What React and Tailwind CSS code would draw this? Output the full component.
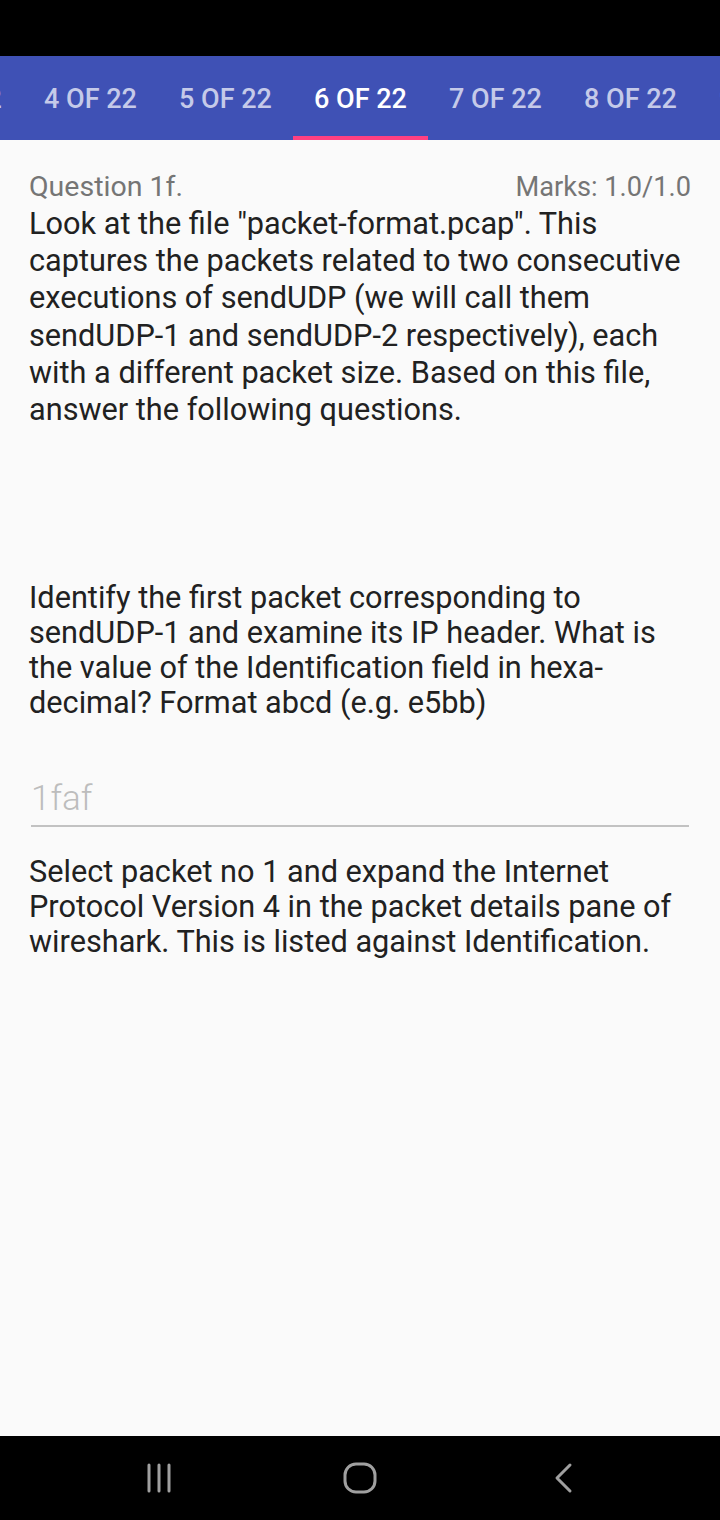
import React from 'react';

const tabs = ['3 OF 22', '4 OF 22', '5 OF 22', '6 OF 22', '7 OF 22', '8 OF 22', '9 OF 22'];

const intro = [
    'Look at the file "packet-format.pcap". This',
    'captures the packets related to two consecutive',
    'executions of sendUDP (we will call them',
    'sendUDP-1 and sendUDP-2 respectively), each',
    'with a different packet size. Based on this file,',
    'answer the following questions.',
];

const question = [
    'Identify the first packet corresponding to',
    'sendUDP-1 and examine its IP header. What is',
    'the value of the Identification field in hexa-',
    'decimal? Format abcd (e.g. e5bb)',
];

const feedback = [
    'Select packet no 1 and expand the Internet',
    'Protocol Version 4 in the packet details pane of',
    'wireshark. This is listed against Identification.',
];

const Lines = ({ lines, className }) => (
    <div className={className}>
        {lines.map((l) => (
            <div key={l} className="whitespace-nowrap">{l}</div>
        ))}
    </div>
);

const App = () => {
    return (
        <div className="w-[720px] h-[1520px] flex flex-col bg-[#fafafa] font-['Roboto',sans-serif] overflow-hidden">
            <div className="h-[56px] bg-black shrink-0" />
            <div className="h-[84px] bg-[#3f51b5] shrink-0 flex overflow-hidden">
                <div className="flex shrink-0 -ml-[112px]">
                    {tabs.map((t) => {
                        const active = t === '6 OF 22';
                        return (
                            <div key={t} className="w-[135px] shrink-0 flex flex-col">
                                <div className={`flex-1 flex items-center justify-center text-[27px] font-medium pt-[6px] ${active ? 'text-white' : 'text-[#c5cae9]'}`}>
                                    {t}
                                </div>
                                <div className={`h-[4px] ${active ? 'bg-[#ff4081]' : ''}`} />
                            </div>
                        );
                    })}
                </div>
            </div>

            <div className="flex-1 px-[29px] pt-[29px]">
                <div className="flex justify-between items-baseline leading-[36px] text-[#757575]">
                    <span className="text-[28.5px]">Question 1f.</span>
                    <span className="text-[27.2px]">Marks: 1.0/1.0</span>
                </div>
                <Lines lines={intro} className="text-[30.7px] leading-[37.2px] text-[#212121]" />

                <Lines lines={question} className="mt-[152px] text-[30.7px] leading-[35px] text-[#212121]" />

                <div className="mt-[59px] mx-[2px] border-b-2 border-[#c2c2c2] pb-[6px]">
                    <span className="text-[35px] leading-[40px] font-light text-[#bdbdbd]">1faf</span>
                </div>

                <Lines lines={feedback} className="mt-[27px] text-[30.7px] leading-[35px] text-[#212121]" />
            </div>

            <div className="h-[84px] bg-black shrink-0 flex items-center pl-[60px]">
                <div className="w-[200px] flex justify-center">
                    <svg width="28" height="30" viewBox="0 0 28 30">
                        <line x1="3" y1="2" x2="3" y2="28" stroke="#a0a0a0" strokeWidth="3" strokeLinecap="round" />
                        <line x1="13" y1="2" x2="13" y2="28" stroke="#a0a0a0" strokeWidth="3" strokeLinecap="round" />
                        <line x1="23" y1="2" x2="23" y2="28" stroke="#a0a0a0" strokeWidth="3" strokeLinecap="round" />
                    </svg>
                </div>
                <div className="w-[200px] flex justify-center">
                    <svg width="34" height="32" viewBox="0 0 34 32">
                        <rect x="2" y="2" width="30" height="28" rx="11" fill="none" stroke="#a0a0a0" strokeWidth="3" />
                    </svg>
                </div>
                <div className="w-[206px] flex justify-center">
                    <svg width="20" height="32" viewBox="0 0 20 32">
                        <polyline points="17,3 4,16 17,29" fill="none" stroke="#a0a0a0" strokeWidth="3" strokeLinecap="round" strokeLinejoin="round" />
                    </svg>
                </div>
            </div>
        </div>
    );
};

export default App;
